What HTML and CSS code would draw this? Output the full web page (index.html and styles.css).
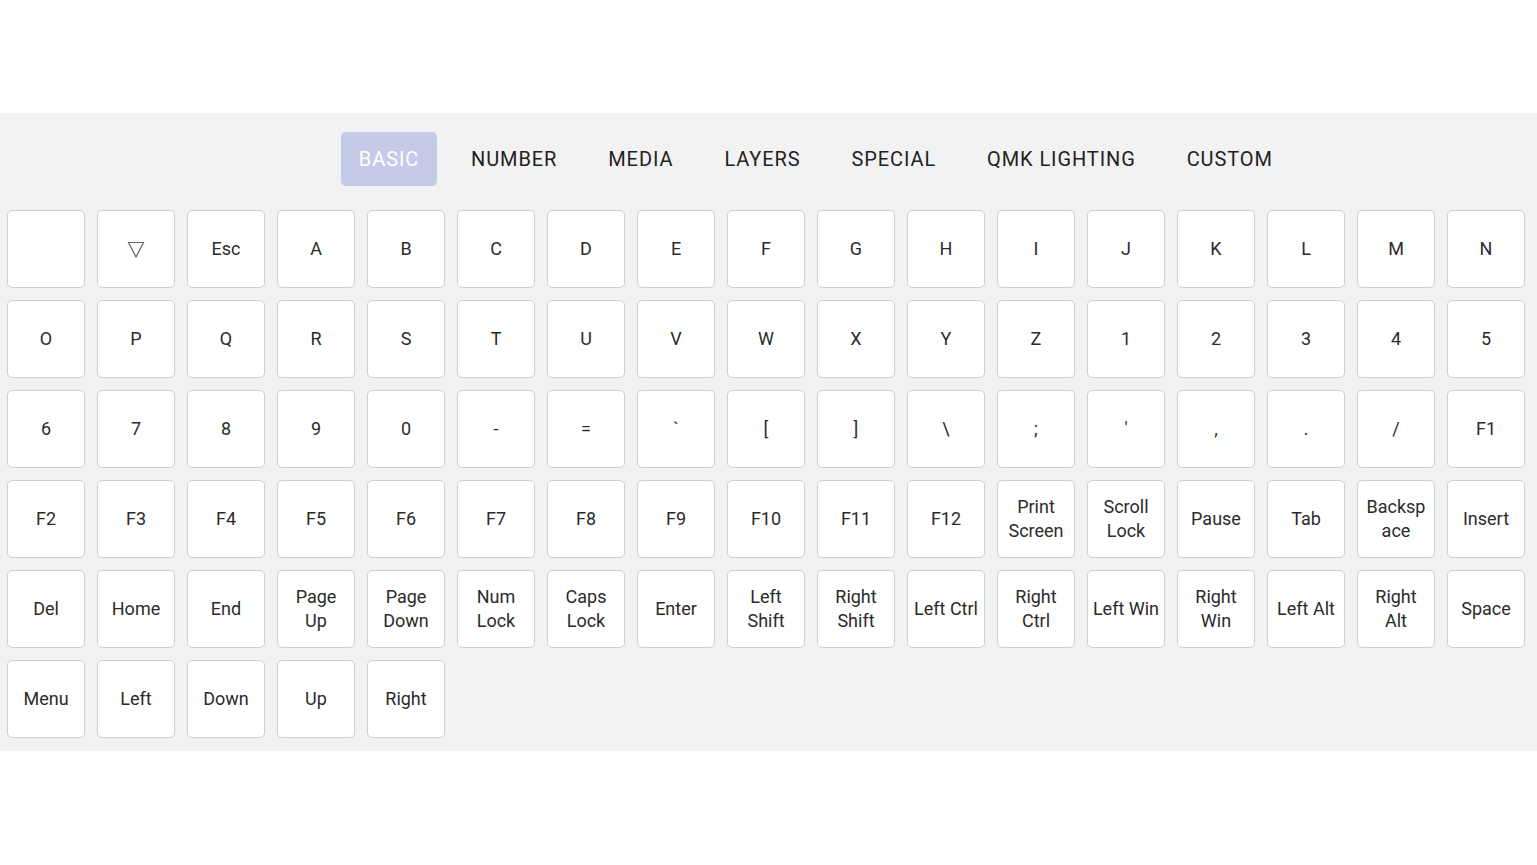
FILE: index.html
```html
<!DOCTYPE html>
<html>
<head>
<meta charset="utf-8">
<link rel="stylesheet" href="styles.css">
</head>
<body>
<div class="top"></div>
<div class="panel">
  <div class="tabs">
    <div class="tab active">BASIC</div>
    <div class="tab">NUMBER</div>
    <div class="tab">MEDIA</div>
    <div class="tab">LAYERS</div>
    <div class="tab">SPECIAL</div>
    <div class="tab">QMK LIGHTING</div>
    <div class="tab">CUSTOM</div>
  </div>
  <div class="keys">
    <div class="key"></div>
    <div class="key"><svg width="18" height="17" viewBox="0 0 18 17"><path d="M1.5 1.5 H16.5 L9 16 Z" fill="none" stroke="#666" stroke-width="1.2" stroke-linejoin="miter"/></svg></div>
    <div class="key">Esc</div>
    <div class="key">A</div>
    <div class="key">B</div>
    <div class="key">C</div>
    <div class="key">D</div>
    <div class="key">E</div>
    <div class="key">F</div>
    <div class="key">G</div>
    <div class="key">H</div>
    <div class="key">I</div>
    <div class="key">J</div>
    <div class="key">K</div>
    <div class="key">L</div>
    <div class="key">M</div>
    <div class="key">N</div>
    <div class="key">O</div>
    <div class="key">P</div>
    <div class="key">Q</div>
    <div class="key">R</div>
    <div class="key">S</div>
    <div class="key">T</div>
    <div class="key">U</div>
    <div class="key">V</div>
    <div class="key">W</div>
    <div class="key">X</div>
    <div class="key">Y</div>
    <div class="key">Z</div>
    <div class="key">1</div>
    <div class="key">2</div>
    <div class="key">3</div>
    <div class="key">4</div>
    <div class="key">5</div>
    <div class="key">6</div>
    <div class="key">7</div>
    <div class="key">8</div>
    <div class="key">9</div>
    <div class="key">0</div>
    <div class="key">-</div>
    <div class="key">=</div>
    <div class="key">`</div>
    <div class="key">[</div>
    <div class="key">]</div>
    <div class="key">\</div>
    <div class="key">;</div>
    <div class="key">'</div>
    <div class="key">,</div>
    <div class="key">.</div>
    <div class="key">/</div>
    <div class="key">F1</div>
    <div class="key">F2</div>
    <div class="key">F3</div>
    <div class="key">F4</div>
    <div class="key">F5</div>
    <div class="key">F6</div>
    <div class="key">F7</div>
    <div class="key">F8</div>
    <div class="key">F9</div>
    <div class="key">F10</div>
    <div class="key">F11</div>
    <div class="key">F12</div>
    <div class="key">Print<br>Screen</div>
    <div class="key">Scroll<br>Lock</div>
    <div class="key">Pause</div>
    <div class="key">Tab</div>
    <div class="key">Backspace</div>
    <div class="key">Insert</div>
    <div class="key">Del</div>
    <div class="key">Home</div>
    <div class="key">End</div>
    <div class="key">Page<br>Up</div>
    <div class="key">Page<br>Down</div>
    <div class="key">Num<br>Lock</div>
    <div class="key">Caps<br>Lock</div>
    <div class="key">Enter</div>
    <div class="key">Left<br>Shift</div>
    <div class="key">Right<br>Shift</div>
    <div class="key">Left Ctrl</div>
    <div class="key">Right<br>Ctrl</div>
    <div class="key">Left Win</div>
    <div class="key">Right<br>Win</div>
    <div class="key">Left Alt</div>
    <div class="key">Right<br>Alt</div>
    <div class="key">Space</div>
    <div class="key">Menu</div>
    <div class="key">Left</div>
    <div class="key">Down</div>
    <div class="key">Up</div>
    <div class="key">Right</div>
  </div>
</div>
</body>
</html>
```

FILE: styles.css
```css
html, body {
  margin: 0;
  padding: 0;
  background: #ffffff;
  font-family: Roboto, "Liberation Sans", sans-serif;
  color: #272727;
}
.top {
  height: 113px;
}
.panel {
  background: #f2f2f2;
  padding: 19px 0 13px 0;
}
.tabs {
  display: flex;
  gap: 17px;
  padding-left: 341px;
  margin-bottom: 24px;
}
.tab {
  box-sizing: border-box;
  min-width: 96px;
  height: 54px;
  padding: 0 17px;
  display: flex;
  align-items: center;
  justify-content: center;
  font-size: 20px;
  letter-spacing: 0.9px;
  color: #222;
  border-radius: 5px;
}
.tab.active {
  background: #c5cae9;
  color: #ffffff;
}
.keys {
  display: flex;
  flex-wrap: wrap;
  gap: 12px;
  padding-left: 7px;
}
.key {
  box-sizing: border-box;
  width: 78px;
  height: 78px;
  background: #ffffff;
  border: 1px solid #cfcfcf;
  border-radius: 5px;
  display: flex;
  align-items: center;
  justify-content: center;
  text-align: center;
  padding: 0 4px;
  font-size: 18px;
  line-height: 24px;
  color: #2b2b2b;
  overflow-wrap: anywhere;
}
.key svg {
  display: block;
}
```
